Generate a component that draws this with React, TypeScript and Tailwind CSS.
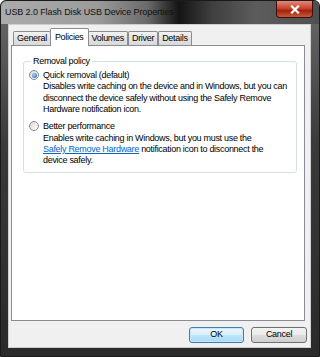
import React from "react";

function Radio({ checked }: { checked?: boolean }) {
  return (
    <div className="w-[10px] h-[10px] rounded-full border border-[#8a8a8a] bg-[linear-gradient(135deg,#d8d8d8,#ffffff)] flex items-center justify-center shrink-0">
      {checked ? (
        <div className="w-[5px] h-[5px] rounded-full bg-[radial-gradient(circle_at_35%_35%,#9fd4ff,#1a5fa8)]" />
      ) : null}
    </div>
  );
}

function Tab({ label, selected }: { label: string; selected?: boolean }) {
  if (selected) {
    return (
      <div className="h-[18px] px-[4px] -mx-[1px] bg-white border border-b-0 border-[#898c95] rounded-t-[2px] flex items-center relative z-10 mb-[-1px]">
        {label}
      </div>
    );
  }
  return (
    <div className="h-[14px] px-[3px] bg-[linear-gradient(#f3f3f3,#e3e3e3_50%,#d9d9d9)] border border-b-0 border-[#898c95] rounded-t-[2px] flex items-center">
      {label}
    </div>
  );
}

export default function App() {
  return (
    <div
      className="w-[320px] h-[357px] relative overflow-hidden text-black tracking-[-0.3px]"
      style={{ fontFamily: '"Liberation Sans", Arial, sans-serif' }}
    >
      <div className="absolute inset-0 rounded-t-[6px] bg-[linear-gradient(180deg,#6a6a6a_0%,#3a3a3a_40%,#2a2a2a_100%)] border border-[#1a1a1a] flex flex-col">
        {/* title bar */}
        <div className="h-[23px] shrink-0 flex items-start relative bg-[linear-gradient(90deg,#ababab_0%,#9c9c9c_30%,#6a6a6a_46%,#141414_56%,#3e3e3e_66%,#5c5c5c_80%,#505050_100%)] rounded-t-[6px]">
          <div className="pl-[4px] pt-[5px] text-[9px] leading-[12px] text-[#111] tracking-[-0.1px]">
            USB 2.0 Flash Disk USB Device Properties
          </div>
          <div className="ml-auto mr-[6px] w-[37px] h-[17px] rounded-b-[4px] border border-[#3a1010] border-t-0 bg-[linear-gradient(#e08a78_0%,#c9462e_45%,#a5220e_60%,#c85a3a_100%)] flex items-center justify-center">
            <svg width="10" height="9" viewBox="0 0 10 9">
              <path d="M2 1.5 L8 7.5 M8 1.5 L2 7.5" stroke="#ffffff" strokeWidth="2.2" strokeLinecap="square" />
            </svg>
          </div>
        </div>
        {/* client */}
        <div className="flex-1 ml-[7px] mr-[8px] mb-[8px] bg-[#f0f0f0] border border-[#cfcfcf] flex flex-col text-[9px] leading-[11.5px]">
          <div className="flex items-end pl-[4px] pt-[3px]">
            <Tab label="General" />
            <Tab label="Policies" selected />
            <Tab label="Volumes" />
            <Tab label="Driver" />
            <Tab label="Details" />
          </div>
          <div className="ml-[2px] mr-[5px] h-[276px] bg-white border border-[#898c95] pt-[10px] pl-[11px] pr-[7px]">
            <fieldset className="border border-[#d5dfe5] rounded-[3px] h-[117px] pl-[5px] pr-[4px] whitespace-nowrap">
              <legend className="ml-[2px] px-[2px]">Removal policy</legend>
              <div className="flex items-center gap-[4px] mt-[2px]">
                <Radio checked />
                <span>Quick removal (default)</span>
              </div>
              <div className="pl-[14px]">
                Disables write caching on the device and in Windows, but you can
                <br />
                disconnect the device safely without using the Safely Remove
                <br />
                Hardware notification icon.
              </div>
              <div className="flex items-center gap-[4px] mt-[5px]">
                <Radio />
                <span>Better performance</span>
              </div>
              <div className="pl-[14px] pt-[1px] leading-[11px]">
                Enables write caching in Windows, but you must use the
                <br />
                <span className="text-[#0066cc] underline">Safely Remove Hardware</span> notification icon to disconnect the
                <br />
                device safely.
              </div>
            </fieldset>
          </div>
          <div className="flex justify-end gap-[7px] mt-[6px] mr-[3px]">
            <div className="w-[55px] h-[16px] rounded-[3px] border border-[#3c7fb1] bg-[linear-gradient(#eaf6fd_0%,#d9f0fc_50%,#bee6fd_51%,#a7d9f5_100%)] shadow-[inset_0_0_0_1px_#c8e6f7] flex items-center justify-center">
              OK
            </div>
            <div className="w-[56px] h-[16px] rounded-[3px] border border-[#707070] bg-[linear-gradient(#f2f2f2_0%,#ebebeb_50%,#dddddd_51%,#cfcfcf_100%)] flex items-center justify-center">
              Cancel
            </div>
          </div>
        </div>
      </div>
    </div>
  );
}
